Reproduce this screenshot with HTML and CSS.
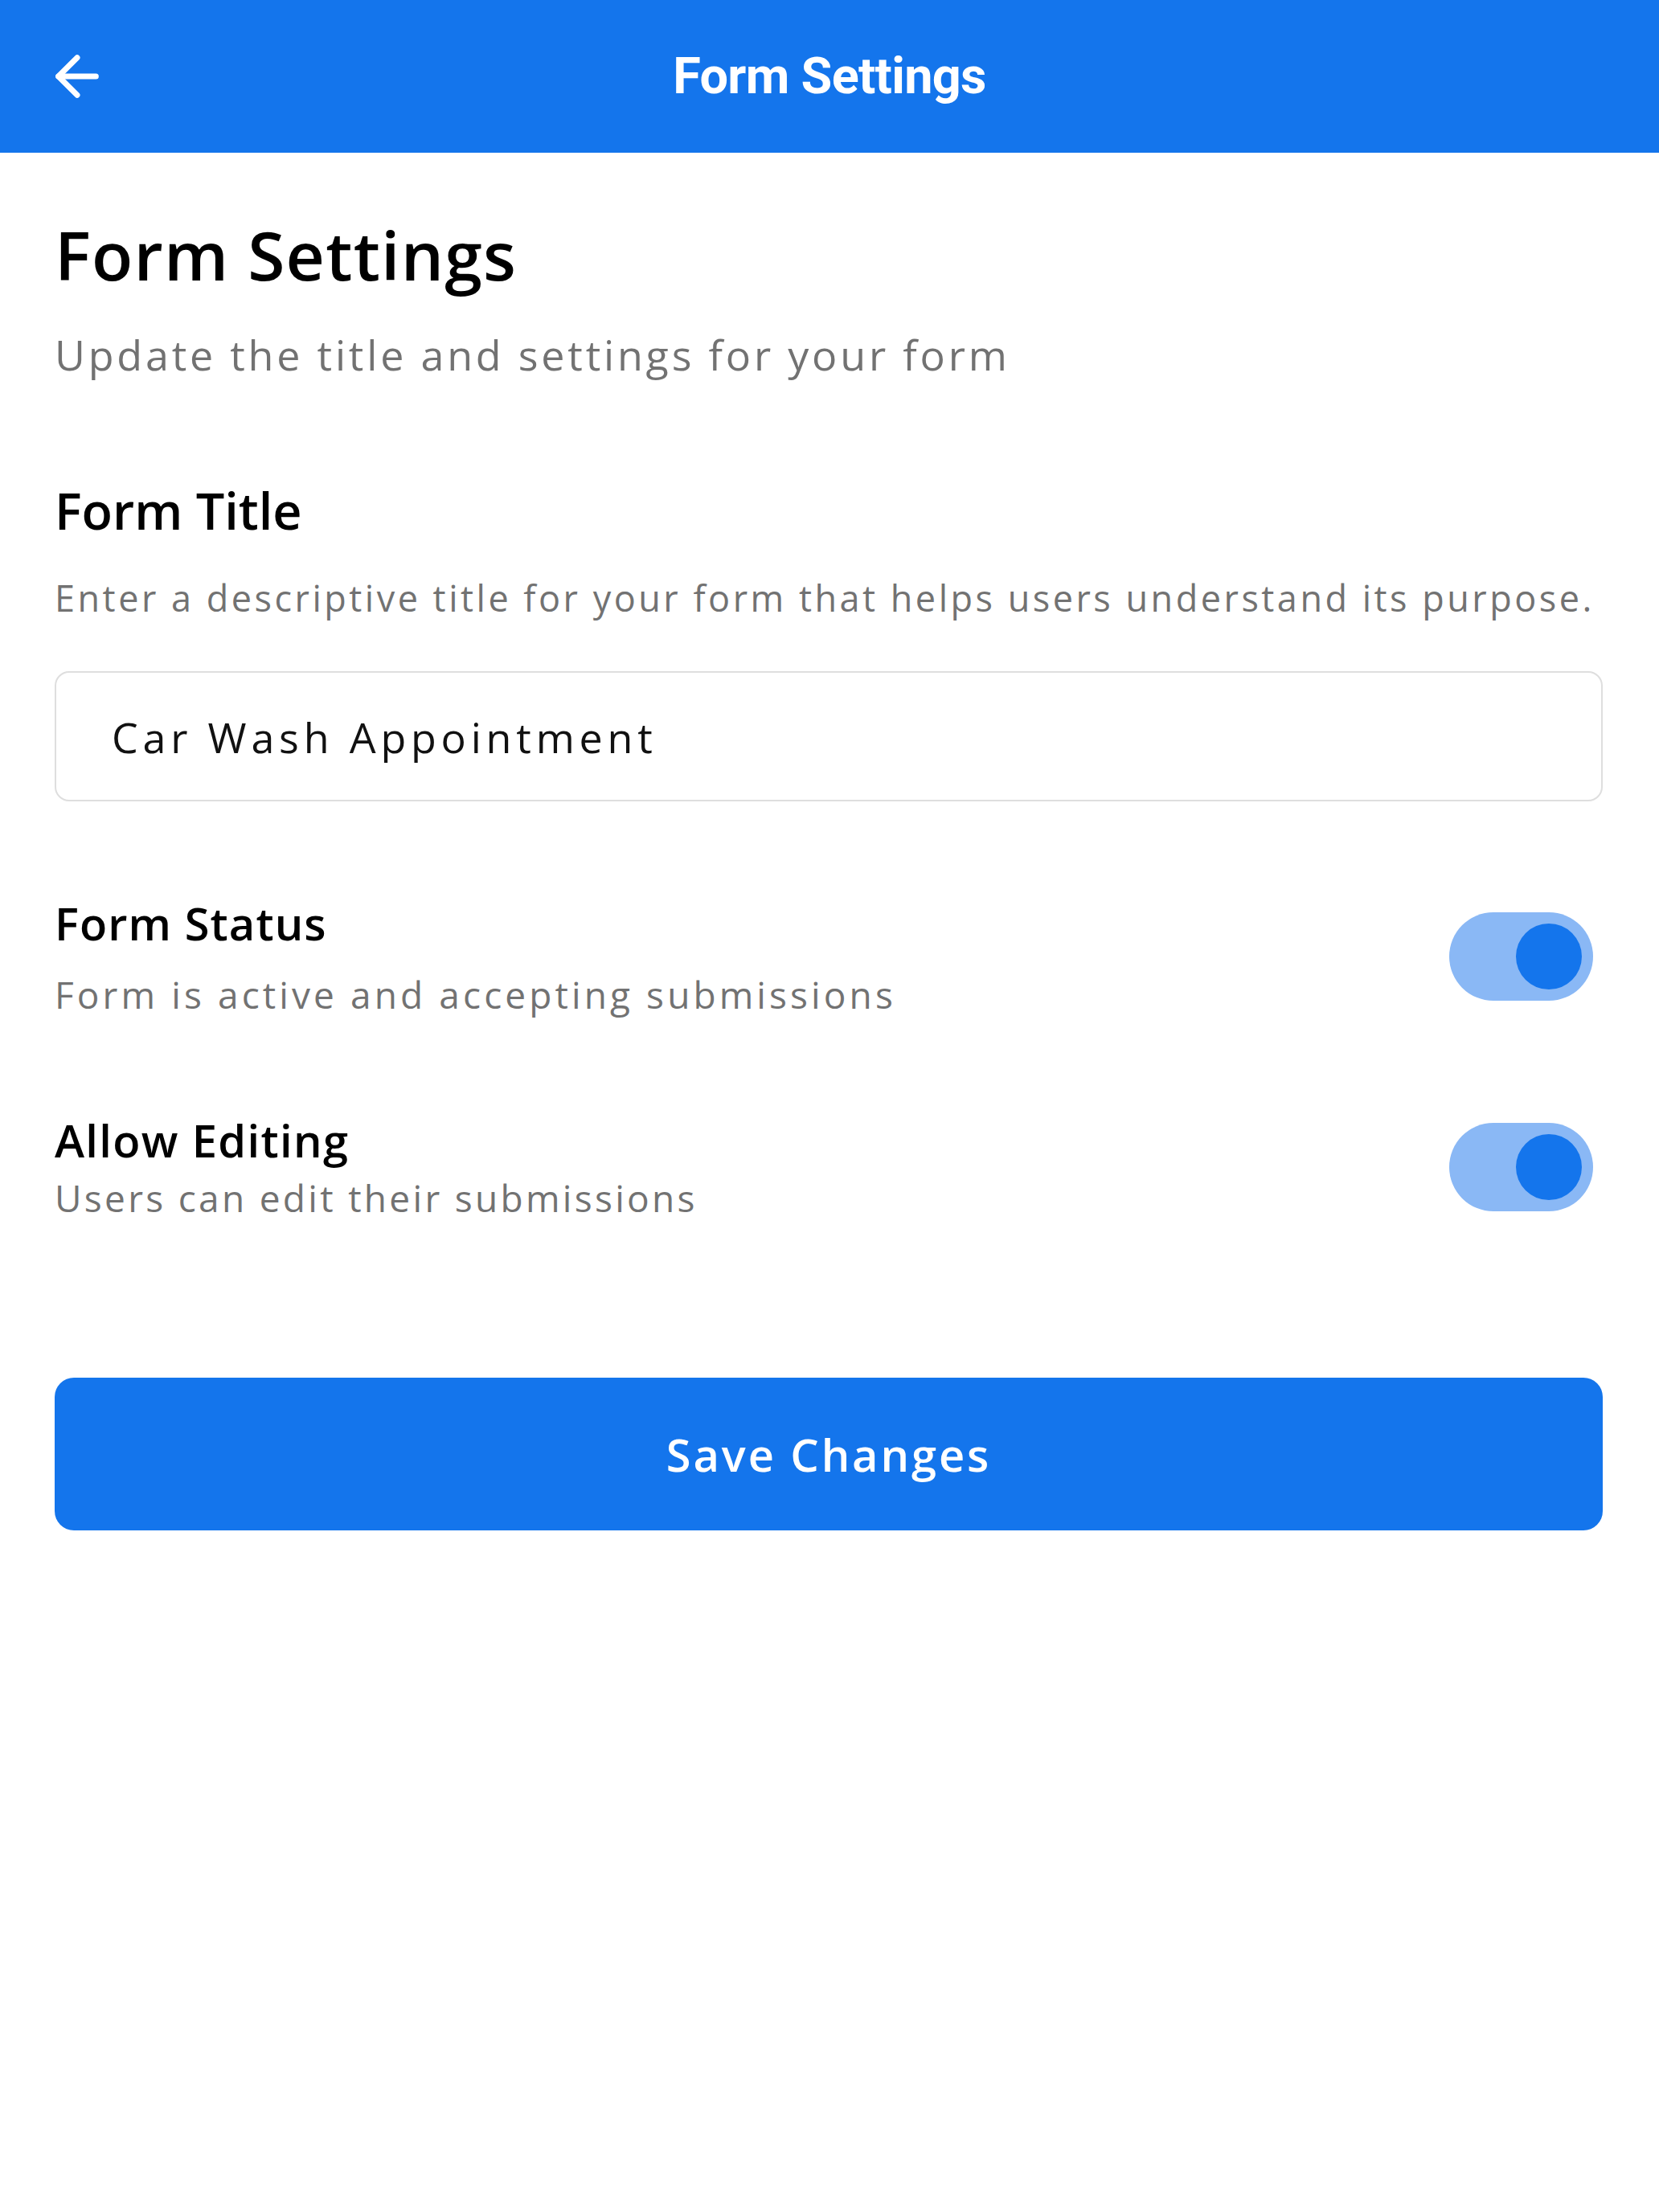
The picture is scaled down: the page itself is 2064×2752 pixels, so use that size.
FILE: index.html
```html
<!DOCTYPE html>
<html lang="en">
<head>
<meta charset="utf-8">
<title>Form Settings</title>
<link rel="stylesheet" href="styles.css">
</head>
<body>
  <header class="appbar">
    <button class="appbar__back" type="button" aria-label="Back">
      <svg viewBox="0 0 24 24" width="80" height="80" fill="none" stroke="currentColor" stroke-width="2.1" stroke-linecap="round" stroke-linejoin="round">
        <path d="M19 12H5"/>
        <path d="M12 19l-7-7 7-7"/>
      </svg>
    </button>
    <h2 class="appbar__title">Form Settings</h2>
    <span class="appbar__spacer"></span>
  </header>

  <main class="content">
    <h1 class="page-title">Form Settings</h1>
    <p class="page-subtitle">Update the title and settings for your form</p>

    <section class="field">
      <h3 class="field__label">Form Title</h3>
      <p class="field__help">Enter a descriptive title for your form that helps users understand its purpose.</p>
      <div class="field__input">Car Wash Appointment</div>
    </section>

    <section class="setting">
      <div class="setting__text">
        <h3 class="setting__title">Form Status</h3>
        <p class="setting__desc">Form is active and accepting submissions</p>
      </div>
      <span class="toggle toggle--on" role="switch" aria-checked="true"><span class="toggle__thumb"></span></span>
    </section>

    <section class="setting setting--tight">
      <div class="setting__text">
        <h3 class="setting__title setting__title--wide">Allow Editing</h3>
        <p class="setting__desc setting__desc--short">Users can edit their submissions</p>
      </div>
      <span class="toggle toggle--on" role="switch" aria-checked="true"><span class="toggle__thumb"></span></span>
    </section>

    <button class="save-button" type="button">Save Changes</button>
  </main>
</body>
</html>
```

FILE: styles.css
```css
* {
  box-sizing: border-box;
}

html, body {
  margin: 0;
  padding: 0;
  background: #ffffff;
}

body {
  font-family: "Open Sans", "Noto Sans", sans-serif;
  color: #000000;
}

/* Top app bar */
.appbar {
  height: 190px;
  background: #1475ec;
  display: grid;
  grid-template-columns: 1fr auto 1fr;
  align-items: center;
  color: #ffffff;
}

.appbar__back {
  justify-self: start;
  margin-left: 56px;
  width: 80px;
  height: 80px;
  padding: 0;
  border: 0;
  background: none;
  color: #ffffff;
  display: flex;
}

.appbar__title {
  margin: 0;
  font-family: Roboto, "Liberation Sans", sans-serif;
  font-weight: 700;
  font-size: 63px;
  line-height: 80px;
  letter-spacing: -0.7px;
}

/* Page body */
.content {
  padding: 77px 70px 0 68px;
}

.page-title {
  margin: 0;
  font-size: 84px;
  line-height: 100px;
  font-weight: 600;
  letter-spacing: 1.2px;
  color: #000000;
}

.page-subtitle {
  margin: 39px 0 0;
  font-size: 52px;
  line-height: 70px;
  letter-spacing: 3.8px;
  color: #727272;
}

.field {
  margin-top: 119px;
}

.field__label {
  margin: 0;
  font-size: 63px;
  line-height: 80px;
  font-weight: 600;
}

.field__help {
  margin: 39px 0 0;
  font-size: 45px;
  line-height: 60px;
  letter-spacing: 3.5px;
  white-space: nowrap;
  color: #727272;
}

.field__input {
  margin-top: 61px;
  height: 162px;
  border: 2px solid #dedede;
  border-radius: 18px;
  padding-left: 69px;
  display: flex;
  align-items: center;
  font-size: 52px;
  letter-spacing: 5.8px;
  color: #111111;
}

/* Switch rows */
.setting {
  margin-top: 116px;
  display: flex;
  align-items: center;
  justify-content: space-between;
}

.setting__title {
  margin: 0;
  font-size: 56px;
  line-height: 70px;
  font-weight: 600;
  letter-spacing: 1.1px;
}

.setting__title--wide {
  letter-spacing: 1.35px;
}

.setting__desc {
  margin: 24px 0 0;
  font-size: 46px;
  line-height: 60px;
  letter-spacing: 4.1px;
  color: #727272;
}

.setting__desc--short {
  letter-spacing: 3.3px;
}

.setting--tight .setting__desc {
  margin-top: 7px;
}

.toggle {
  width: 179px;
  height: 110px;
  margin-right: 12px;
  border-radius: 55px;
  background: #8ab8f5;
  display: flex;
  align-items: center;
  justify-content: flex-end;
  padding-right: 14px;
  flex-shrink: 0;
}

.toggle__thumb {
  width: 82px;
  height: 82px;
  border-radius: 50%;
  background: #1475ec;
}

/* Primary action */
.save-button {
  margin-top: 194px;
  width: 100%;
  height: 190px;
  border: 0;
  border-radius: 24px;
  background: #1475ec;
  color: #ffffff;
  font-family: "Open Sans", "Noto Sans", sans-serif;
  font-size: 56px;
  font-weight: 600;
  letter-spacing: 2.9px;
  display: flex;
  align-items: center;
  justify-content: center;
}
```
